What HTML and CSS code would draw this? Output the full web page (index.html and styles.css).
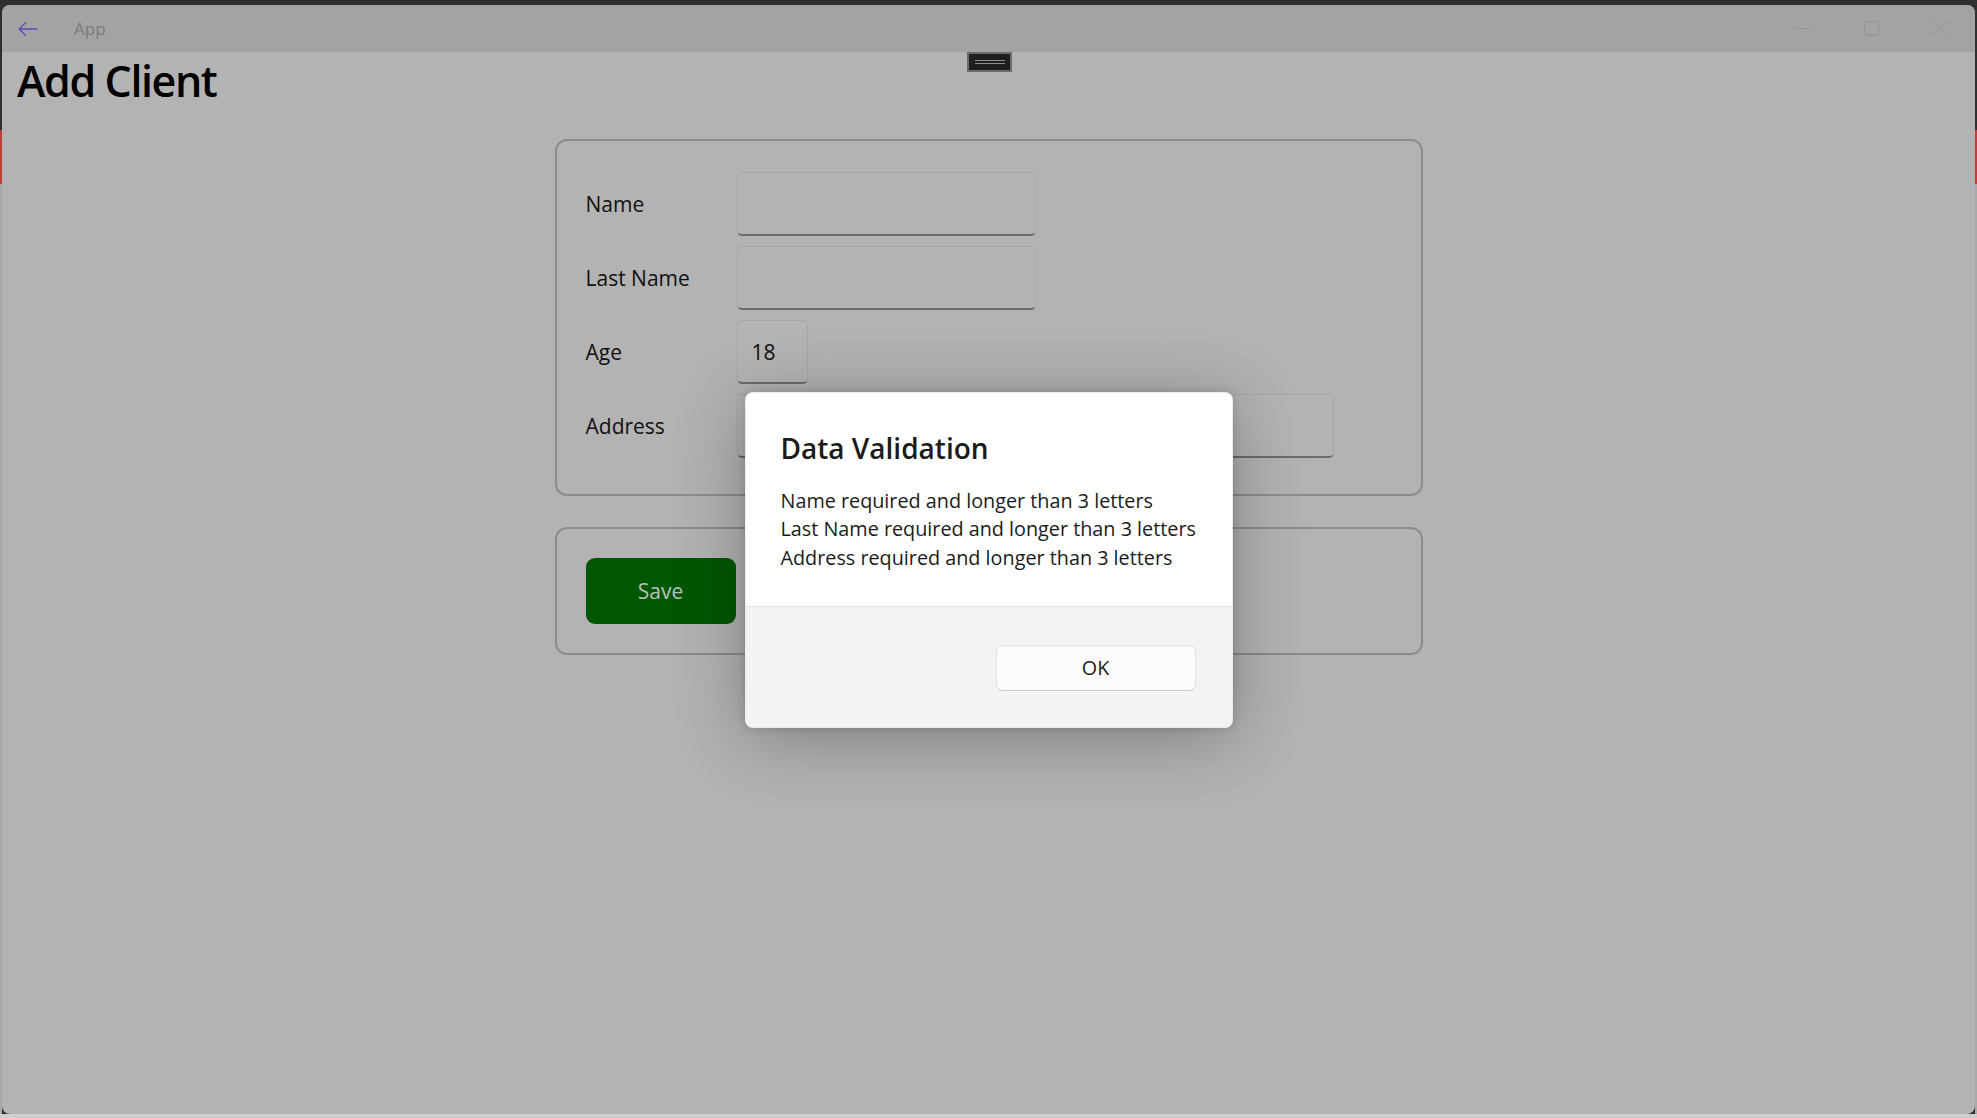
FILE: index.html
```html
<!DOCTYPE html>
<html lang="en">
<head>
<meta charset="utf-8">
<title>App</title>
<link rel="stylesheet" href="styles.css">
</head>
<body>
<div class="window">
  <header class="titlebar">
    <span class="back">
      <svg width="20" height="16" viewBox="0 0 20 16"><path d="M19.5 8H1.2M8 1.2L1.2 8L8 14.8" fill="none" stroke="#5b4dbb" stroke-width="1.3"/></svg>
    </span>
    <span class="app-title">App</span>
    <div class="caption-buttons">
      <span class="cap-btn"><svg width="15" height="15" viewBox="0 0 15 15"><path d="M0 7.5H15" stroke="#939393" stroke-width="1"/></svg></span>
      <span class="cap-btn"><svg width="15" height="15" viewBox="0 0 15 15"><rect x="0.5" y="0.5" width="14" height="14" rx="3" fill="none" stroke="#939393" stroke-width="1"/></svg></span>
      <span class="cap-btn"><svg width="15" height="15" viewBox="0 0 15 15"><path d="M0.5 0.5L14.5 14.5M14.5 0.5L0.5 14.5" stroke="#939393" stroke-width="1"/></svg></span>
    </div>
  </header>

  <div class="debug-handle"><span></span></div>

  <main class="page">
    <h1 class="page-title">Add Client</h1>

    <section class="card form-card">
      <div class="form-grid">
        <label class="field-label">Name</label>
        <div class="input input-md"></div>
        <label class="field-label">Last Name</label>
        <div class="input input-md"></div>
        <label class="field-label">Age</label>
        <div class="input input-sm">18</div>
        <label class="field-label">Address</label>
        <div class="input input-lg"></div>
      </div>
    </section>

    <section class="card actions-card">
      <button class="save-btn">Save</button>
    </section>
  </main>

  <div class="smoke">
    <div class="dialog">
      <div class="dialog-content">
        <h2 class="dialog-title">Data Validation</h2>
        <p class="dialog-text">Name required and longer than 3 letters<br>Last Name required and longer than 3 letters<br>Address required and longer than 3 letters</p>
      </div>
      <div class="dialog-footer">
        <button class="ok-btn">OK</button>
      </div>
    </div>
  </div>
</div>
</body>
</html>
```

FILE: styles.css
```css
html, body {
  margin: 0;
  height: 1118px;
  overflow: hidden;
}

body {
  font-family: "Open Sans", "Noto Sans", sans-serif;
  background:
    linear-gradient(#c33c3c, #c33c3c) left 0 top 130px / 2px 54px no-repeat,
    linear-gradient(#c33c3c, #c33c3c) right 0 top 130px / 2px 54px no-repeat,
    linear-gradient(#a9a9a9, #a9a9a9) left 0 top 184px / 2px 930px no-repeat,
    linear-gradient(#a9a9a9, #a9a9a9) right 0 top 184px / 2px 930px no-repeat,
    linear-gradient(to bottom, #2f2f2f 1114px, #cdcdcd 1114px);
}

.window {
  position: relative;
  margin: 5px 2px 0;
  height: 1109px;
  border-radius: 8px;
  overflow: hidden;
  background: #b3b3b3;
}

/* title bar */
.titlebar {
  height: 47px;
  background: #a3a3a3;
  display: flex;
  align-items: center;
}

.back {
  display: flex;
  margin-left: 16px;
  width: 20px;
}

.app-title {
  margin-left: 36px;
  font-size: 17px;
  color: #7a7a7a;
  line-height: 1;
}

.caption-buttons {
  margin-left: auto;
  display: flex;
}

.cap-btn {
  width: 69px;
  height: 47px;
  display: flex;
  align-items: center;
  justify-content: center;
}

.debug-handle {
  position: absolute;
  left: 965px;
  top: 47px;
  width: 45px;
  height: 20px;
  box-sizing: border-box;
  background: #1f1f1f;
  border: 2px solid #6b6b6b;
  display: flex;
  align-items: center;
  justify-content: center;
}

.debug-handle span {
  display: block;
  width: 30px;
  height: 2px;
  border-top: 1px solid #8a8a8a;
  border-bottom: 1px solid #8a8a8a;
}

/* page */
.page {
  padding: 0 15px;
}

.page-title {
  margin: 2px 0 0;
  font-size: 43px;
  font-weight: 600;
  letter-spacing: -1.4px;
  line-height: 54px;
  color: #000;
}

.card {
  width: 868px;
  box-sizing: border-box;
  margin: 31px auto 0;
  border: 2px solid #8c8c8c;
  border-radius: 12px;
}

.form-card {
  padding: 31px 29px 36px;
}

.form-grid {
  display: grid;
  grid-template-columns: 151px 1fr;
  grid-auto-rows: 64px;
  row-gap: 10px;
  align-items: center;
}

.field-label {
  font-size: 21px;
  color: #111;
}

.input {
  height: 64px;
  box-sizing: border-box;
  border: 1px solid #a7a7a7;
  border-bottom: 2px solid #6b6b6b;
  border-radius: 5px;
  background: #b4b4b4;
  font-size: 21px;
  color: #111;
  padding-left: 14px;
  display: flex;
  align-items: center;
}

.input-md { width: 299px; }
.input-sm { width: 71px; }
.input-lg { width: 597px; }

.actions-card {
  margin-top: 31px;
  padding: 29px;
}

.save-btn {
  display: block;
  width: 150px;
  height: 66px;
  border: none;
  border-radius: 9px;
  background: #005700;
  color: #b9c3b9;
  font-family: "Open Sans", sans-serif;
  font-size: 21px;
  padding: 0;
}

/* dialog overlay */
.smoke {
  position: absolute;
  inset: 0;
  display: flex;
  align-items: center;
  justify-content: center;
}

.dialog {
  width: 488px;
  height: 336px;
  box-sizing: border-box;
  background: #fff;
  border-radius: 8px;
  overflow: hidden;
  border: 1px solid rgba(0, 0, 0, 0.08);
  box-shadow: 0 10px 70px rgba(0, 0, 0, 0.3), 0 0 8px rgba(0, 0, 0, 0.15);
  display: flex;
  flex-direction: column;
}

.dialog-content {
  height: 213px;
  box-sizing: border-box;
  padding: 37px 35px 0;
}

.dialog-title {
  margin: 0;
  font-size: 28px;
  font-weight: 600;
  line-height: 36px;
  color: #1b1b1b;
}

.dialog-text {
  margin: 21px 0 0;
  font-size: 19.8px;
  line-height: 28.5px;
  color: #1b1b1b;
}

.dialog-footer {
  flex: 1;
  border-top: 1px solid #e5e5e5;
  background: #f3f3f3;
  padding: 38px 36px 0;
  display: flex;
  justify-content: flex-end;
  align-items: flex-start;
}

.ok-btn {
  width: 200px;
  height: 46px;
  box-sizing: border-box;
  border: 1px solid #e3e3e3;
  border-bottom-color: #c9c9c9;
  border-radius: 6px;
  background: #fbfbfb;
  font-family: "Open Sans", sans-serif;
  font-size: 19.8px;
  color: #1b1b1b;
  padding: 0;
}
```
